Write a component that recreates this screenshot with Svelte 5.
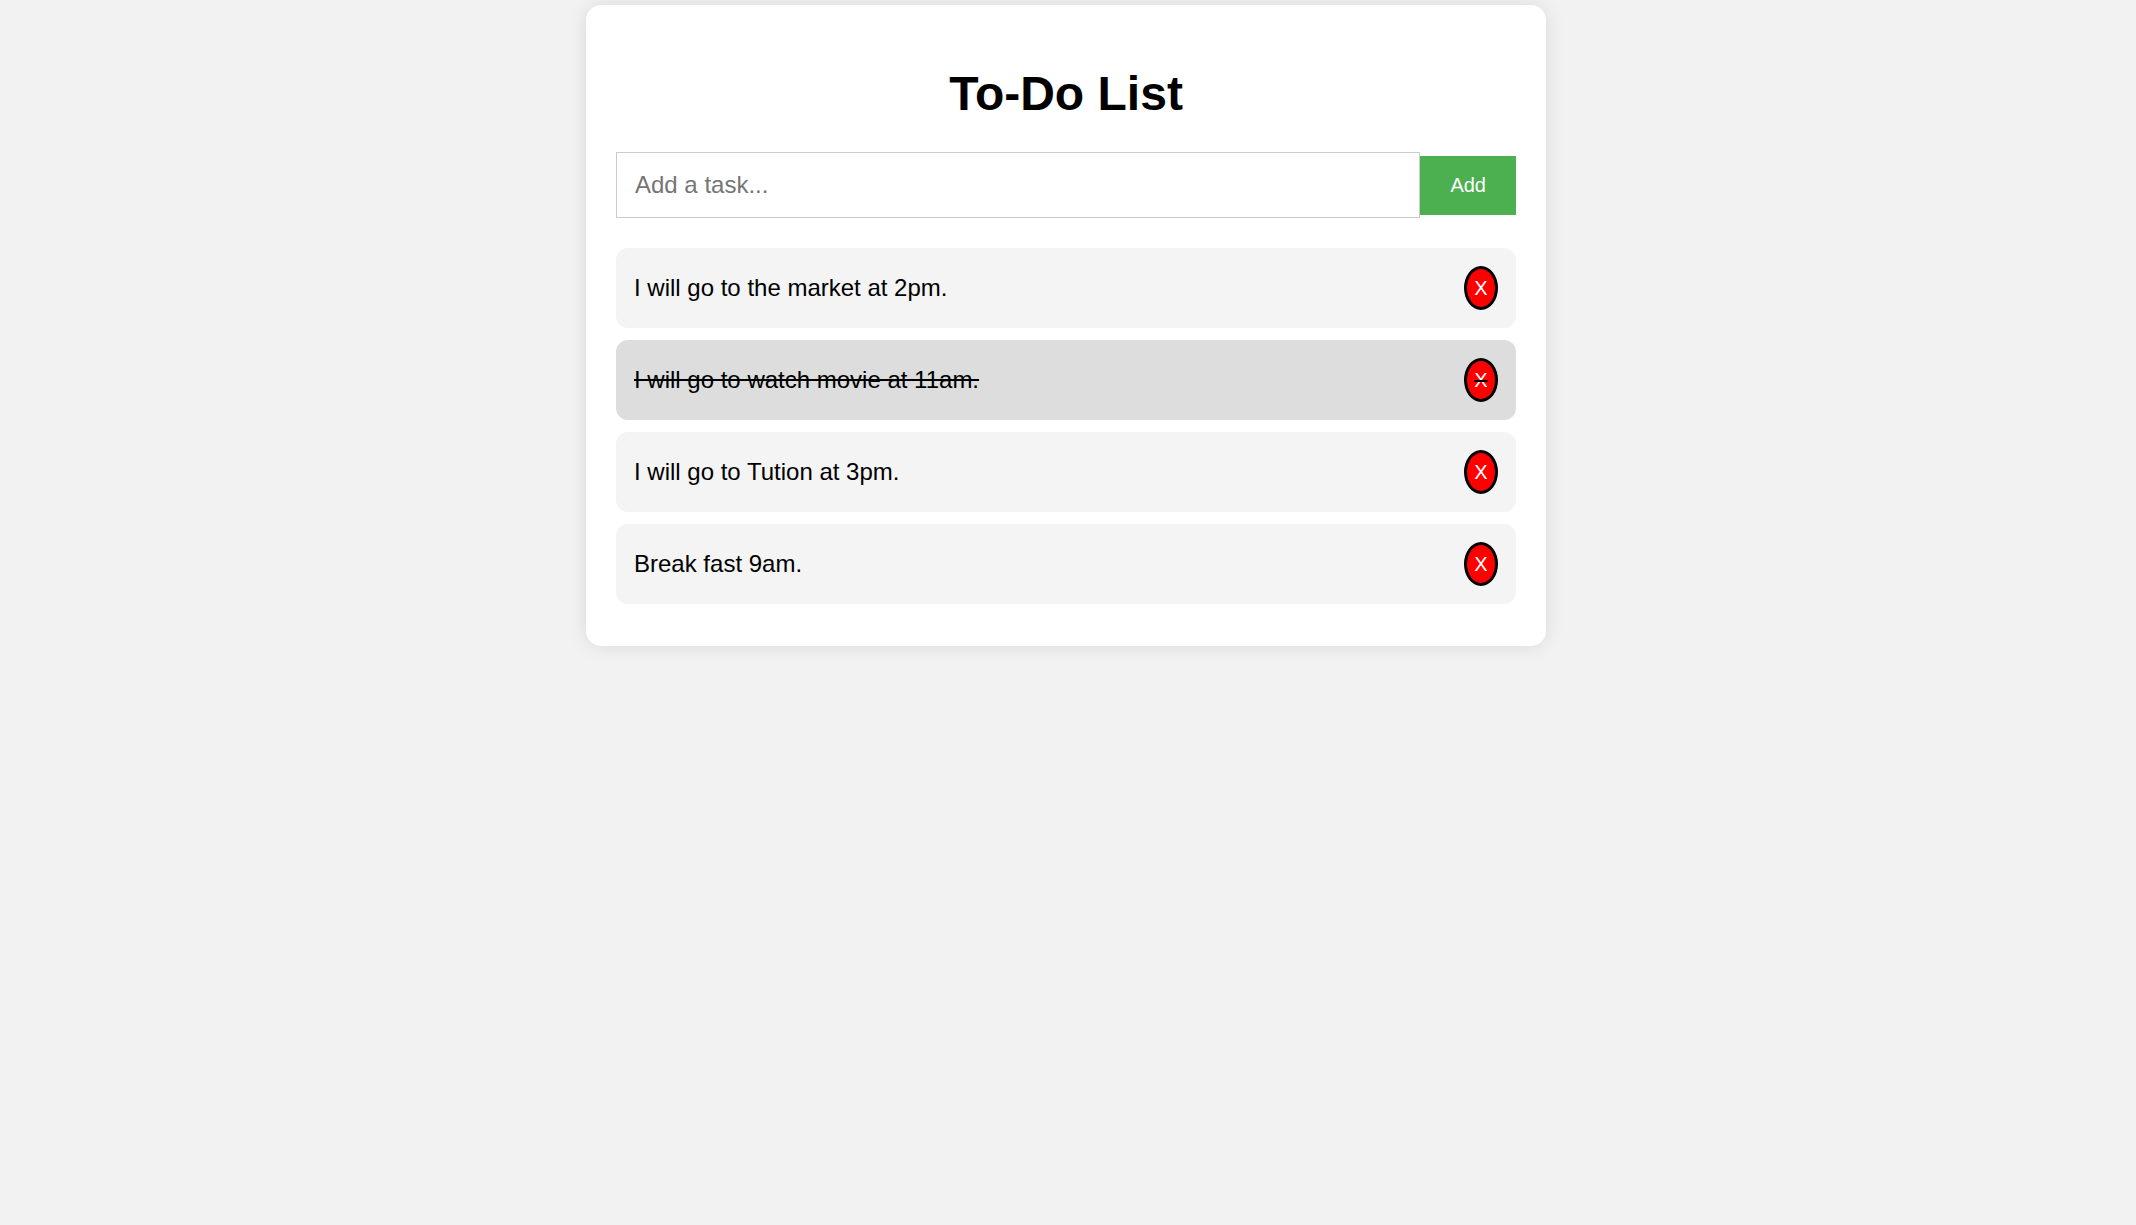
<script>
  let tasks = [
    { text: 'I will go to the market at 2pm.', done: false },
    { text: 'I will go to watch movie at 11am.', done: true },
    { text: 'I will go to Tution at 3pm.', done: false },
    { text: 'Break fast 9am.', done: false }
  ];
</script>

<div class="page">
  <div class="container">
    <h1>To-Do List</h1>
    <div class="add-row">
      <input type="text" placeholder="Add a task..." />
      <button class="add">Add</button>
    </div>
    <ul>
      {#each tasks as task}
        <li class:done={task.done}>
          {task.text}
          <button class="remove">X</button>
        </li>
      {/each}
    </ul>
  </div>
</div>

<style>
  :global(body) {
    margin: 0;
    background: #f2f2f2;
    font-family: "Liberation Sans", Arial, sans-serif;
  }

  .page {
    min-height: 1225px;
    padding-right: 4px;
    box-sizing: border-box;
  }

  .container {
    width: 900px;
    margin: 5px auto 0;
    padding: 30px;
    background: #fff;
    border-radius: 15px;
    box-shadow: 0 0 20px rgba(0, 0, 0, 0.1);
  }

  h1 {
    margin: 31px 0;
    font-size: 48px;
    line-height: 55px;
    font-weight: bold;
    text-align: center;
    color: #000;
  }

  .add-row {
    display: flex;
    align-items: center;
  }

  input {
    flex: 1;
    min-width: 0;
    padding: 18px;
    font-family: "Liberation Sans", Arial, sans-serif;
    font-size: 24px;
    line-height: 28px;
    border: 1px solid #ccc;
    outline: none;
  }

  .add {
    height: 59px;
    padding: 0 30px;
    font-family: "Liberation Sans", Arial, sans-serif;
    font-size: 20px;
    color: #fff;
    background: #4caf50;
    border: none;
  }

  ul {
    margin: 30px 0 0;
    padding: 0;
    list-style: none;
  }

  li {
    display: flex;
    justify-content: space-between;
    align-items: center;
    margin-bottom: 12px;
    padding: 18px;
    font-size: 24px;
    color: #000;
    background: #f4f4f4;
    border-radius: 12px;
  }

  li.done {
    background: #ddd;
    text-decoration: line-through;
  }

  .remove {
    width: 34px;
    height: 44px;
    padding: 0;
    font-family: "Liberation Sans", Arial, sans-serif;
    font-size: 20px;
    color: #fff;
    background: #f00;
    border: 3px solid #000;
    border-radius: 50%;
  }
</style>
